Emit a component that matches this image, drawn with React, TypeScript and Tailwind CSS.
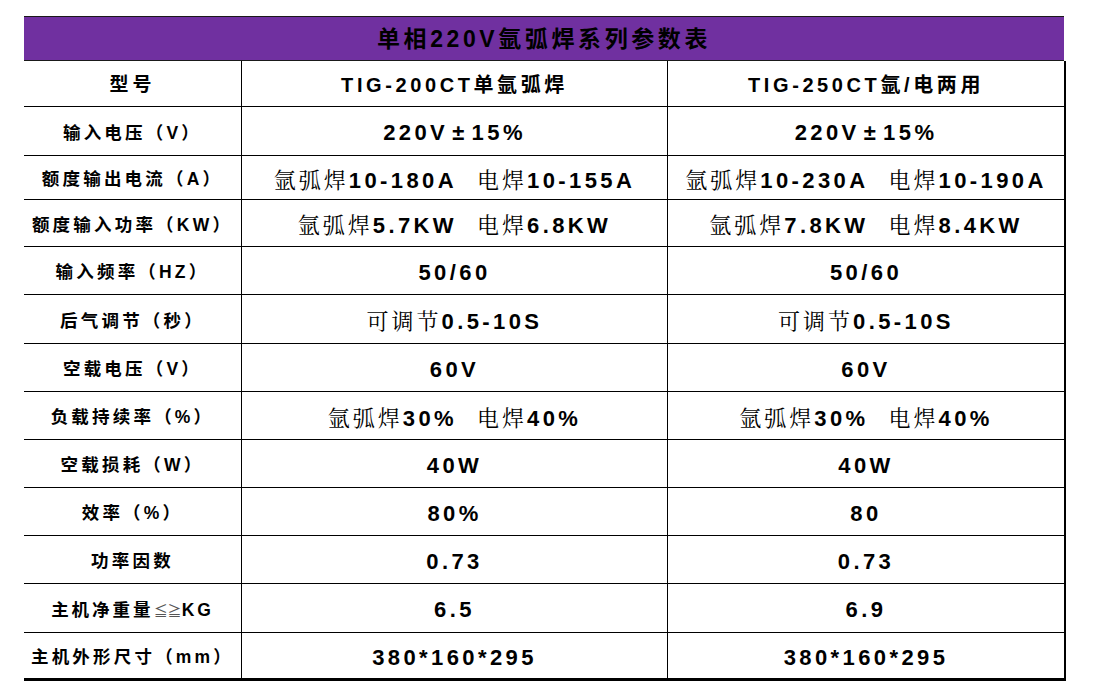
type Seg = { t: string; song?: boolean; gap?: boolean };

interface SpecRow {
  label: string;
  h: string;
  a: Seg[];
  b: Seg[];
  head?: boolean;
  last?: boolean;
}

const latin = "font-['Liberation_Sans','Noto_Sans_CJK_SC',sans-serif]";
const song = "font-['Noto_Serif_CJK_SC','Noto_Sans_CJK_SC',serif]";

const rows: SpecRow[] = [
  {
    label: "型号",
    h: "h-[46px]",
    head: true,
    a: [{ t: "TIG-200CT单氩弧焊" }],
    b: [{ t: "TIG-250CT氩/电两用" }],
  },
  { label: "输入电压（V）", h: "h-[49px]", a: [{ t: "220V±15%" }], b: [{ t: "220V±15%" }] },
  {
    label: "额度输出电流（A）",
    h: "h-[44px]",
    a: [{ t: "氩弧焊", song: true }, { t: "10-180A" }, { t: "电焊", song: true, gap: true }, { t: "10-155A" }],
    b: [{ t: "氩弧焊", song: true }, { t: "10-230A" }, { t: "电焊", song: true, gap: true }, { t: "10-190A" }],
  },
  {
    label: "额度输入功率（KW）",
    h: "h-[47px]",
    a: [{ t: "氩弧焊", song: true }, { t: "5.7KW" }, { t: "电焊", song: true, gap: true }, { t: "6.8KW" }],
    b: [{ t: "氩弧焊", song: true }, { t: "7.8KW" }, { t: "电焊", song: true, gap: true }, { t: "8.4KW" }],
  },
  { label: "输入频率（HZ）", h: "h-[48px]", a: [{ t: "50/60" }], b: [{ t: "50/60" }] },
  {
    label: "后气调节（秒）",
    h: "h-[49px]",
    a: [{ t: "可调节", song: true }, { t: "0.5-10S" }],
    b: [{ t: "可调节", song: true }, { t: "0.5-10S" }],
  },
  { label: "空载电压（V）", h: "h-[48px]", a: [{ t: "60V" }], b: [{ t: "60V" }] },
  {
    label: "负载持续率（%）",
    h: "h-[48px]",
    a: [{ t: "氩弧焊", song: true }, { t: "30%" }, { t: "电焊", song: true, gap: true }, { t: "40%" }],
    b: [{ t: "氩弧焊", song: true }, { t: "30%" }, { t: "电焊", song: true, gap: true }, { t: "40%" }],
  },
  { label: "空载损耗（W）", h: "h-[48px]", a: [{ t: "40W" }], b: [{ t: "40W" }] },
  { label: "效率（%）", h: "h-[48px]", a: [{ t: "80%" }], b: [{ t: "80" }] },
  { label: "功率因数", h: "h-[48px]", a: [{ t: "0.73" }], b: [{ t: "0.73" }] },
  { label: "主机净重量≦≧KG", h: "h-[49px]", a: [{ t: "6.5" }], b: [{ t: "6.9" }] },
  {
    label: "主机外形尺寸（mm）",
    h: "h-[48px]",
    last: true,
    a: [{ t: "380*160*295" }],
    b: [{ t: "380*160*295" }],
  },
];

const Label = ({ text, head }: { text: string; head?: boolean }) => {
  if (text.includes("≦≧")) {
    const [pre, post] = text.split("≦≧");
    return (
      <span className="tracking-[3px]">
        {pre}
        <span className="text-[14px] font-normal tracking-normal text-[#555]">≦≧</span>
        {post}
      </span>
    );
  }
  return <span className={head ? "text-[19px] tracking-[4px]" : "tracking-[3.2px]"}>{text}</span>;
};

// the ± sign sits in a wider box in the source sheet
const Num = ({ t }: { t: string }) => {
  if (!t.includes("±")) return <>{t}</>;
  const [pre, post] = t.split("±");
  return (
    <>
      {pre}
      <span className="mx-[4px]">±</span>
      {post}
    </>
  );
};

const Value = ({ segs, head }: { segs: Seg[]; head?: boolean }) => (
  <div className="flex items-baseline justify-center">
    {segs.map((s, i) =>
      s.song ? (
        <span
          key={i}
          className={`${song} text-[22px] font-normal tracking-[3px] ${s.gap ? "ml-[20px]" : ""}`}
        >
          {s.t}
        </span>
      ) : (
        <span
          key={i}
          className={head ? "text-[20px] font-bold tracking-[3.6px]" : "text-[22px] font-bold tracking-[3.4px]"}
        >
          <Num t={s.t} />
        </span>
      ),
    )}
  </div>
);

export default function App() {
  return (
    <div className={`min-h-[692px] w-[1094px] bg-white pl-[24px] pt-[16px] text-black ${latin}`}>
      {/* title bar */}
      <div className="flex h-[45px] w-[1040px] items-center justify-center border-y border-[#1a1a1a] bg-[#7030a0] pt-[2px] text-[23px] font-bold tracking-[3.6px]">
        单相220V氩弧焊系列参数表
      </div>

      {/* spec rows */}
      <div className="w-[1042px] border-r-2 border-black">
        {rows.map((r) => (
          <div
            key={r.label}
            className={`grid grid-cols-[217px_426px_397px] border-black ${r.h} ${
              r.last ? "border-b-[3px]" : "border-b"
            }`}
          >
            <div className="flex items-center justify-center pt-[4px] text-[17.5px] font-bold">
              <Label text={r.label} head={r.head} />
            </div>
            <div className="flex items-center justify-center border-l border-black pt-[3px]">
              <Value segs={r.a} head={r.head} />
            </div>
            <div className="flex items-center justify-center border-l border-black pt-[3px]">
              <Value segs={r.b} head={r.head} />
            </div>
          </div>
        ))}
      </div>
    </div>
  );
}
